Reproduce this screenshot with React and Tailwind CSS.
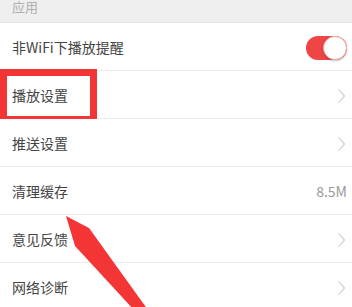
const rows = [
  { label: '非WiFi下播放提醒', type: 'toggle' },
  { label: '播放设置', type: 'arrow', marked: true },
  { label: '推送设置', type: 'arrow' },
  { label: '清理缓存', type: 'value', value: '8.5M' },
  { label: '意见反馈', type: 'arrow' },
  { label: '网络诊断', type: 'arrow' },
];

function Chevron() {
  return (
    <svg width="9" height="16" viewBox="0 0 9 16" className="mr-[1px]">
      <polyline points="1.5,1.5 7.5,8 1.5,14.5" fill="none" stroke="#c6c6c6" strokeWidth="1.1" />
    </svg>
  );
}

function Toggle() {
  return (
    <div className="relative w-[41px] h-[24px] rounded-full bg-[#ef4545]">
      <div className="absolute right-0 top-0 w-[24px] h-[24px] rounded-full bg-white border border-[#f2b0b0] shadow-[0_1px_2px_rgba(0,0,0,0.25)]" />
    </div>
  );
}

function Row({ row }) {
  return (
    <div className="relative flex items-center justify-between h-[48px] pl-[12px] pr-[5px] pt-[2px] border-b border-[#ececec] bg-white">
      <span className="text-[14px] text-[#444444]">{row.label}</span>
      {row.type === 'toggle' && <Toggle />}
      {row.type === 'arrow' && <Chevron />}
      {row.type === 'value' && <span className="text-[14px] text-[#9a9a9a]">{row.value}</span>}
      {row.marked && (
        <div className="absolute left-0 top-[-2px] w-[97px] h-[54px] border-[7px] border-[#f33535]" />
      )}
    </div>
  );
}

export default function App() {
  return (
    <div
      className="relative w-[352px] h-[307px] overflow-hidden bg-white"
      style={{ fontFamily: '"Noto Sans CJK SC", "Noto Sans", sans-serif' }}
    >
      <div className="h-[23px] bg-[#efefef] border-b border-[#e4e4e4] pl-[12px] overflow-hidden">
        <span className="block -mt-[4px] text-[13px] leading-[22px] text-[#b0b0b0]">应用</span>
      </div>
      {rows.map((row) => (
        <Row key={row.label} row={row} />
      ))}

      {/* annotation arrow */}
      <svg className="absolute left-0 top-0 pointer-events-none" width="352" height="307" viewBox="0 0 352 307">
        <polygon points="66,216 89,228 148,310 134,310 75,246" fill="#f33535" />
      </svg>
    </div>
  );
}
